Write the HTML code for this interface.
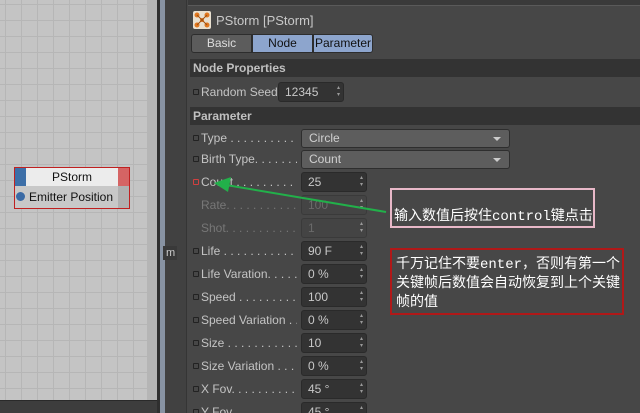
<!DOCTYPE html>
<html><head><meta charset="utf-8"><style>
*{margin:0;padding:0;box-sizing:border-box}
html,body{width:640px;height:413px;overflow:hidden}
body{background:#474747;position:relative;font-family:"Liberation Sans","Noto Sans CJK SC",sans-serif;font-size:12px;color:#c8c8c8}
.a{position:absolute}
.grid{left:0;top:0;width:147px;height:400px;background-color:#c4c4c4;background-image:linear-gradient(to right,#b6b6b6 1px,transparent 1px),linear-gradient(to bottom,#b6b6b6 1px,transparent 1px);background-size:16px 16px;background-position:5px 4px}
.lbl{left:201px;white-space:nowrap;overflow:hidden;width:96px;font-size:12px;color:#c4c4c4}
.dot{left:193px;width:6px;height:6px;border:1px solid #222;border-radius:1px}
.inp{left:301px;width:66px;height:20px;background:#333;border:1px solid #2a2a2a;border-radius:3px;padding-left:6px;line-height:18px;color:#c8c8c8}
.inp:after{content:"▴\A▾";white-space:pre;position:absolute;right:3px;top:2px;font-size:6px;line-height:7px;color:#999}
.dd{left:301px;width:209px;height:19px;background:#5d5d5d;border:1px solid #2e2e2e;border-radius:3px;padding-left:7px;line-height:17px;color:#d0d0d0}
.dd:after{content:"";position:absolute;right:8px;top:7px;border-left:4px solid transparent;border-right:4px solid transparent;border-top:4px solid #ccc}
.hd{left:190px;width:450px;height:18px;background:#333;font-weight:bold;padding-left:3px;line-height:18px;color:#c0c0c0}
.cn{color:#fff;font-size:14px;font-family:'Liberation Mono','Noto Sans CJK SC',monospace;white-space:nowrap}
</style></head><body>
<div class="a grid"></div>
<div class="a" style="left:147px;top:0;width:10px;height:400px;background:#b5b5b5"></div>
<div class="a" style="left:0;top:400px;width:157px;height:13px;background:#3d3d3d;border-top:1px solid #2a2a2a"></div>
<div class="a" style="left:157px;top:0;width:3px;height:413px;background:#2f2f2f"></div>
<div class="a" style="left:160px;top:0;width:5px;height:413px;background:#8893a3"></div>
<div class="a" style="left:165px;top:0;width:22px;height:413px;background:#414141;border-right:1px solid #353535"></div>
<div class="a" style="left:163px;top:246px;width:14px;height:14px;background:#393939;color:#ccc;font-size:11px;line-height:14px;padding-left:3px">m</div>
<div class="a" style="left:188px;top:0;width:452px;height:6px;background:#3a3a3a;border-bottom:1px solid #5a5a5a"></div>

<div class="a" style="left:14px;top:167px;width:116px;height:42px;border:1px solid #c02020;background:#c8c8c8">
 <div class="a" style="left:0;top:0;width:11px;height:18px;background:#3d6fa8"></div>
 <div class="a" style="left:11px;top:0;width:92px;height:18px;background:#ececec;text-align:center;line-height:18px;color:#111">PStorm</div>
 <div class="a" style="left:103px;top:0;width:11px;height:18px;background:#d56464"></div>
 <div class="a" style="left:103px;top:18px;width:11px;height:22px;background:#b0b0b0"></div>
 <div class="a" style="left:1px;top:24px;width:9px;height:9px;border-radius:50%;background:#3a6aa5"></div>
 <div class="a" style="left:14px;top:18px;line-height:22px;color:#111">Emitter Position</div>
</div>

<div class="a" style="left:193px;top:11px;width:18px;height:18px;background:#e8e0d0;border-radius:2px">
<svg width="18" height="18"><g fill="#e07820"><circle cx="4" cy="4" r="2.5"/><circle cx="14" cy="4" r="2.5"/><circle cx="4" cy="14" r="2.5"/><circle cx="14" cy="14" r="2.5"/><circle cx="9" cy="9" r="2"/></g><path d="M4 4L14 14M14 4L4 14" stroke="#a05010" stroke-width="1"/></svg></div>
<div class="a" style="left:216px;top:13px;font-size:13px;color:#c8c8c8">PStorm [PStorm]</div>
<div class="a" style="left:191px;top:34px;width:61px;height:19px;background:#5c5c5c;border:1px solid #2d2d2d;border-radius:3px 0 0 3px;text-align:center;line-height:17px;color:#ddd">Basic</div>
<div class="a" style="left:252px;top:34px;width:61px;height:19px;background:#8da5cd;border:1px solid #2d2d2d;text-align:center;line-height:17px;color:#111">Node</div>
<div class="a" style="left:313px;top:34px;width:60px;height:19px;background:#8da5cd;border:1px solid #2d2d2d;border-radius:0 3px 3px 0;text-align:center;line-height:17px;color:#111">Parameter</div>

<div class="a hd" style="top:59px">Node Properties</div>
<div class="a dot" style="top:89px"></div><div class="a lbl" style="top:85px">Random Seed</div>
<div class="a inp" style="left:278px;top:82px">12345</div>
<div class="a hd" style="top:107px">Parameter</div>

<div class="a dot" style="top:135px"></div><div class="a lbl" style="top:131px">Type . . . . . . . . . . . .</div><div class="a dd" style="top:129px">Circle</div>
<div class="a dot" style="top:156px"></div><div class="a lbl" style="top:152px">Birth Type. . . . . . . .</div><div class="a dd" style="top:150px">Count</div>
<div class="a dot" style="top:179px;border-color:#d04040"></div><div class="a lbl" style="top:175px">Count . . . . . . . . . . .</div><div class="a inp" style="top:172px">25</div>
<div class="a lbl" style="top:198px;color:#777">Rate. . . . . . . . . . . . .</div><div class="a inp" style="top:195px;background:#444;color:#6a6a6a;border-color:#3a3a3a">100</div>
<div class="a lbl" style="top:221px;color:#777">Shot. . . . . . . . . . . . .</div><div class="a inp" style="top:218px;background:#444;color:#6a6a6a;border-color:#3a3a3a">1</div>
<div class="a dot" style="top:248px"></div><div class="a lbl" style="top:244px">Life . . . . . . . . . . . . .</div><div class="a inp" style="top:241px">90 F</div>
<div class="a dot" style="top:271px"></div><div class="a lbl" style="top:267px">Life Varation. . . . . .</div><div class="a inp" style="top:264px">0 %</div>
<div class="a dot" style="top:294px"></div><div class="a lbl" style="top:290px">Speed . . . . . . . . . . .</div><div class="a inp" style="top:287px">100</div>
<div class="a dot" style="top:317px"></div><div class="a lbl" style="top:313px">Speed Variation . . .</div><div class="a inp" style="top:310px">0 %</div>
<div class="a dot" style="top:340px"></div><div class="a lbl" style="top:336px">Size . . . . . . . . . . . . .</div><div class="a inp" style="top:333px">10</div>
<div class="a dot" style="top:363px"></div><div class="a lbl" style="top:359px">Size Variation . . . . .</div><div class="a inp" style="top:356px">0 %</div>
<div class="a dot" style="top:386px"></div><div class="a lbl" style="top:382px">X Fov. . . . . . . . . . . .</div><div class="a inp" style="top:379px">45 °</div>
<div class="a dot" style="top:409px"></div><div class="a lbl" style="top:405px">Y Fov</div><div class="a inp" style="top:402px">45 °</div>

<svg class="a" style="left:0;top:0" width="640" height="413"><line x1="386" y1="212" x2="226" y2="185" stroke="#22b04a" stroke-width="2"/><polygon points="214,183 231,177 228,192" fill="#22b04a"/></svg>

<div class="a cn" style="left:390px;top:188px;width:205px;height:40px;border:2px solid #e8b8c8;padding:15px 0 0 2px">输入数值后按住control键点击</div>
<div class="a cn" style="left:390px;top:248px;width:234px;height:67px;border:2px solid #b01818;line-height:19px;padding:6px 0 0 4px">千万记住不要enter，否则有第一个<br>关键帧后数值会自动恢复到上个关键<br>帧的值</div>
</body></html>
